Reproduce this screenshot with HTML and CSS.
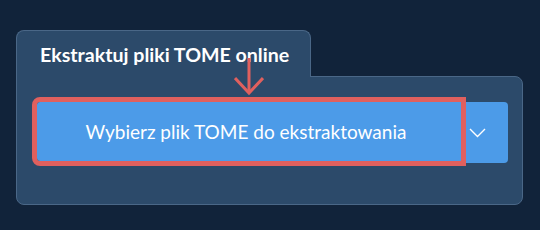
FILE: index.html
```html
<!DOCTYPE html>
<html lang="pl">
<head>
    <meta charset="UTF-8">
    <meta name="viewport" content="width=device-width, initial-scale=1.0">
    <title>Ekstraktuj pliki TOME online</title>
    <link rel="stylesheet" href="styles.css">
</head>
<body>
    <div class="widget">
        <!-- Zakładka z tytułem -->
        <div class="tab">
            <h2>Ekstraktuj pliki TOME online</h2>
        </div>

        <!-- Panel z przyciskami -->
        <div class="panel">
            <div class="btn-group">
                <button class="btn-main">Wybierz plik TOME do ekstraktowania</button>
                <button class="btn-drop" aria-label="Więcej opcji">
                    <svg width="17" height="10" viewBox="0 0 17 10">
                        <polyline points="1,1 8.5,8.5 16,1" fill="none" stroke="#fff" stroke-width="1.4"/>
                    </svg>
                </button>
            </div>
        </div>

        <!-- Strzałka wskazująca przycisk -->
        <svg class="arrow" width="30" height="38" viewBox="0 0 30 38">
            <line x1="15" y1="0" x2="15" y2="35" stroke="#e0605e" stroke-width="3"/>
            <polyline points="1,20 15,35 29,20" fill="none" stroke="#e0605e" stroke-width="3"/>
        </svg>
    </div>
</body>
</html>
```

FILE: styles.css
```css
body {
    margin: 0;
    background-color: #11233a;
    font-family: Lato, "Open Sans", sans-serif;
    width: 540px;
    height: 230px;
    overflow: hidden;
}

.widget {
    position: relative;
    padding: 30px 0 0 16px;
}

/* Zakładka */
.tab {
    position: relative;
    z-index: 1;
    width: 293px;
    height: 46px;
    margin-bottom: -1px;
    background-color: #2c4a6a;
    border: 1px solid #4a6787;
    border-bottom: none;
    border-radius: 8px 8px 0 0;
}

.tab h2 {
    margin: 0;
    padding: 12px 0 0 23px;
    font-size: 19.6px;
    line-height: 24px;
    font-weight: 700;
    color: #fff;
    white-space: nowrap;
}

/* Panel */
.panel {
    width: 505px;
    height: 127px;
    background-color: #2c4a6a;
    border: 1px solid #4a6787;
    border-radius: 0 8px 8px 8px;
}

.btn-group {
    display: flex;
    align-items: flex-start;
    gap: 5px;
    padding: 25px 0 0 20px;
}

.btn-main {
    width: 424px;
    height: 59px;
    padding: 0 6px 0 0;
    border: none;
    border-radius: 3px 0 0 3px;
    outline: 5px solid #e0605e;
    background-color: #4c9be8;
    color: #fff;
    font-family: Lato, sans-serif;
    font-size: 19px;
    font-weight: 400;
    cursor: pointer;
}

.btn-drop {
    display: flex;
    align-items: center;
    width: 42px;
    height: 61px;
    padding: 0 0 0 3px;
    border: none;
    border-radius: 0 4px 4px 0;
    background-color: #4c9be8;
    cursor: pointer;
}

.arrow {
    position: absolute;
    z-index: 2;
    left: 234px;
    top: 58px;
}
```
